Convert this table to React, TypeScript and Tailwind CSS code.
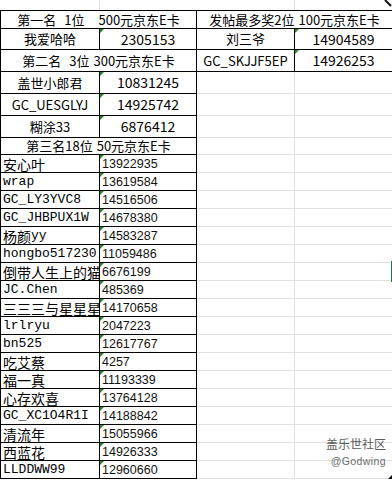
import React from "react";

const top = [
  { name: "我爱哈哈", id: "2305153" },
];
const second = [
  { name: "盖世小郎君", id: "10831245" },
  { name: "GC_UESGLYJ", id: "14925742" },
  { name: "糊涂33", id: "6876412" },
];
const posters = [
  { name: "刘三爷", id: "14904589" },
  { name: "GC_SKJJF5EP", id: "14926253" },
];
const third = [
  ["安心叶", "13922935"],
  ["wrap", "13619584"],
  ["GC_LY3YVC8", "14516506"],
  ["GC_JHBPUX1W", "14678380"],
  ["杨颜yy", "14583287"],
  ["hongbo517230", "11059486"],
  ["倒带人生上的猫", "6676199"],
  ["JC.Chen", "485369"],
  ["三三三与星星星", "14170658"],
  ["lrlryu", "2047223"],
  ["bn525", "12617767"],
  ["吃艾蔡", "4257"],
  ["福一真", "11193339"],
  ["心存欢喜", "13764128"],
  ["GC_XC1O4R1I", "14188842"],
  ["清流年", "15055966"],
  ["西蓝花", "14926333"],
  ["LLDDWW99", "12960660"],
];

const sans = "font-['Noto_Sans_CJK_SC',sans-serif]";

// little green "number stored as text" flag
const Flag = () => (
  <span className="absolute top-0 left-0 w-0 h-0 border-t-[4px] border-r-[4px] border-t-[#1c8a1c] border-r-transparent" />
);

// song-style names: latin half-width, cjk full-width
const Name = ({ text }: { text: string }) => (
  <>
    {text.split(/([\u4e00-\u9fff]+)/).map((part, i) =>
      /[\u4e00-\u9fff]/.test(part) ? (
        <span key={i} className="text-[14px] leading-[16px] font-['Noto_Sans_CJK_SC',sans-serif]">
          {part}
        </span>
      ) : (
        <span key={i} className="text-[13px] leading-[16px] font-['Liberation_Mono',monospace]">
          {part}
        </span>
      )
    )}
  </>
);

const PairRow = ({ name, id, h }: { name: string; id: string; h: string }) => (
  <div className={`flex border-b border-black ${h}`}>
    <div className="w-[99px] border-r border-black flex items-center justify-center text-[13px]">
      {name}
    </div>
    <div className="relative flex-1 flex items-center justify-center text-[14px]">
      <Flag />
      {id}
    </div>
  </div>
);

const GreyRow = ({ h }: { h: string }) => (
  <div className={`flex border-b border-[#e1e1e1] ${h}`}>
    <div className="w-[98px] border-r border-[#e1e1e1]" />
    <div className="flex-1" />
  </div>
);

export default function App() {
  return (
    <div className={`relative w-[392px] h-[480px] overflow-hidden bg-white text-black flex ${sans}`}>
      {/* left sheet */}
      <div className="w-[197px] flex flex-col">
        <div className="h-[10px] flex">
          <div className="w-[100px] border-r border-[#e1e1e1]" />
        </div>
        <div className="border-l border-r border-black flex flex-col">
          <div className="h-[19px] border-t border-b border-black flex items-center justify-center text-[13px] whitespace-nowrap">
            <span>第一名</span>
            <span className="ml-[8px]">1位</span>
            <span className="ml-[14px]">500元京东E卡</span>
          </div>
          {top.map((r) => (
            <PairRow key={r.id} name={r.name} id={r.id} h="h-[21px]" />
          ))}
          <div className="h-[22px] border-b border-black flex items-center justify-center text-[13px] whitespace-nowrap">
            <span>第二名</span>
            <span className="ml-[8px]">3位</span>
            <span className="ml-[4px]">300元京东E卡</span>
          </div>
          {second.map((r) => (
            <PairRow key={r.id} name={r.name} id={r.id} h="h-[22px]" />
          ))}
          <div className="h-[17px] border-b border-black flex items-center justify-center text-[13px] whitespace-nowrap">
            <span>第三名18位</span>
            <span className="ml-[4px]">50元京东E卡</span>
          </div>
          {third.map(([name, id]) => (
            <div key={id} className="h-[18px] flex border-b border-black">
              <div className="w-[99px] border-r border-black pl-[2px] flex items-center overflow-hidden whitespace-nowrap leading-[16px]">
                <Name text={name} />
              </div>
              <div className="relative flex-1 pl-[2px] flex items-center text-[12.5px] leading-[16px] font-['Liberation_Sans',sans-serif] text-[#111]">
                <Flag />
                {id}
              </div>
            </div>
          ))}
        </div>
      </div>

      {/* right sheet */}
      <div className="flex-1 flex flex-col">
        <div className="h-[10px] flex">
          <div className="w-[98px] border-r border-[#e1e1e1]" />
        </div>
        <div className="h-[19px] border-t border-b border-black flex items-center justify-center text-[13px] whitespace-nowrap">
          <span>发帖最多奖2位</span>
          <span className="ml-[4px]">100元京东E卡</span>
        </div>
        <div className="flex h-[21px] border-b border-black">
          <div className="w-[98px] border-r border-black flex items-center justify-center text-[13px]">
            {posters[0].name}
          </div>
          <div className="relative flex-1 flex items-center justify-center text-[14px]">
            <Flag />
            {posters[0].id}
          </div>
        </div>
        <div className="flex h-[22px] border-b border-black">
          <div className="w-[98px] border-r border-black flex items-center justify-center text-[13px]">
            {posters[1].name}
          </div>
          <div className="relative flex-1 flex items-center justify-center text-[14px]">
            <Flag />
            {posters[1].id}
          </div>
        </div>
        <GreyRow h="h-[22px]" />
        <GreyRow h="h-[22px]" />
        <GreyRow h="h-[22px]" />
        <GreyRow h="h-[17px]" />
        {third.map(([, id]) => (
          <GreyRow key={id} h="h-[18px]" />
        ))}
      </div>

      {/* sheet chrome */}
      <svg className="absolute top-0 right-0" width="8" height="7" viewBox="0 0 8 7">
        <path d="M1 0 L7 6" stroke="#111" strokeWidth="2" />
      </svg>
      <div className="absolute right-0 top-[261px] w-[1px] h-[21px] bg-[#217346]" />
      <svg className="absolute right-0 bottom-[1px]" width="4" height="4" viewBox="0 0 4 4">
        <path d="M4 0 L4 4 L0 4 Z" fill="#111" />
      </svg>

      {/* watermark */}
      <div className="absolute right-[6px] top-[437px] flex flex-col items-end text-[#5c5c5c]">
        <span className="text-[12px] leading-[14px]">盖乐世社区</span>
        <span className="mt-[4px] text-[10.5px] leading-[12px] tracking-[0.4px] font-['Liberation_Sans',sans-serif] text-[#6a6a6a]">
          @Godwing
        </span>
      </div>
    </div>
  );
}
